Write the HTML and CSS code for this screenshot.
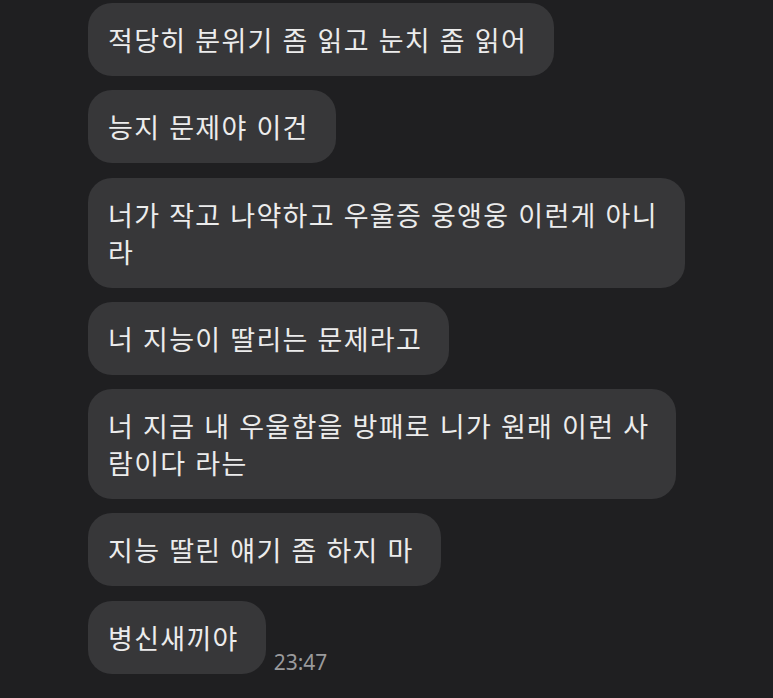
FILE: index.html
```html
<!DOCTYPE html>
<html lang="ko">
<head>
    <meta charset="UTF-8">
    <meta name="viewport" content="width=device-width, initial-scale=1.0">
    <title>Chat</title>
    <link rel="stylesheet" href="styles.css">
</head>
<body>
    <div class="chat">
        <div class="message">적당히 분위기 좀 읽고 눈치 좀 읽어</div>
        <div class="message">능지 문제야 이건</div>
        <div class="message">너가 작고 나약하고 우울증 웅앵웅 이런게 아니<br>라</div>
        <div class="message">너 지능이 딸리는 문제라고</div>
        <div class="message">너 지금 내 우울함을 방패로 니가 원래 이런 사<br>람이다 라는</div>
        <div class="message">지능 딸린 얘기 좀 하지 마</div>
        <div class="last-row">
            <div class="message">병신새끼야</div>
            <span class="time">23:47</span>
        </div>
    </div>
</body>
</html>
```

FILE: styles.css
```css
body {
    background-color: #1f1f21;
    font-family: "Noto Sans CJK KR", "Noto Sans", sans-serif;
    margin: 0;
    min-height: 100vh;
    color: #ececec;
}
.chat {
    display: flex;
    flex-direction: column;
    align-items: flex-start;
    gap: 14.3px;
    padding: 3px 0 0 88px;
}
.message {
    background-color: #373739;
    border-radius: 24px;
    padding: 18px 27px 18px 20px;
    font-size: 27px;
    line-height: 37px;
    letter-spacing: 1.3px;
    white-space: nowrap;
}
.last-row {
    display: flex;
    align-items: flex-end;
    gap: 8px;
}
.time {
    font-family: "Noto Sans", sans-serif;
    font-size: 21px;
    color: #9a9a9c;
    line-height: 22px;
    margin-bottom: 1px;
}
```
